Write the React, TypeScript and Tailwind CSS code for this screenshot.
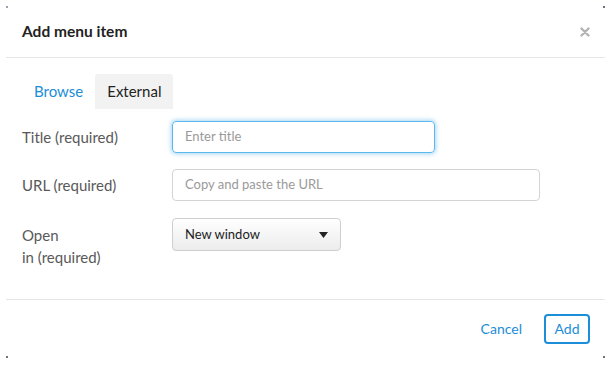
import React from "react";

export default function App() {
  const font = { fontFamily: "Lato, 'Open Sans', 'Noto Sans', sans-serif" };
  return (
    <div className="w-[611px] h-[365px] bg-white relative overflow-hidden" style={font}>
      {/* corner marks */}
      <div className="absolute left-[6px] top-[6px] w-[2px] h-[2px] bg-gray-400" />
      <div className="absolute right-[6px] top-[6px] w-[2px] h-[2px] bg-gray-500" />
      <div className="absolute left-[6px] bottom-[7px] w-[2px] h-[2px] bg-gray-500" />
      <div className="absolute right-[6px] bottom-[7px] w-[2px] h-[2px] bg-gray-500" />
      <div className="ml-[6px] mt-[6px] w-[599px] h-[352px] flex flex-col">
        {/* header */}
        <div className="h-[52px] flex items-center justify-between pl-[16px] pr-[15px] border-b border-[#e6e6e6] shrink-0">
          <div className="text-[15.5px] font-bold text-[#222]">Add menu item</div>
          <svg width="10" height="10" viewBox="0 0 10 10">
            <path d="M1.5 1.5 L8.5 8.5 M8.5 1.5 L1.5 8.5" stroke="#b3b3b3" strokeWidth="2.4" strokeLinecap="round" />
          </svg>
        </div>
        {/* body */}
        <div className="flex-1 pl-[16px] pt-[16px]">
          <div className="flex h-[35px] text-[15px]">
            <div className="px-[12px] flex items-center text-[#1c8dd8]">Browse</div>
            <div className="px-[12px] flex items-center bg-[#f2f2f2] rounded-t-[3px] text-[#222]">External</div>
          </div>
          <div className="flex flex-col gap-[16px] mt-[12px] text-[15px]">
            <div className="flex items-center h-[32px]">
              <div className="w-[150px] text-[#595959]">Title (required)</div>
              <div className="w-[263px] h-[32px] rounded-[4px] border border-[#5eb8ec] shadow-[0_0_4px_1px_rgba(90,180,235,0.55)] flex items-center px-[12px] text-[13px] text-[#9a9a9a]">
                Enter title
              </div>
            </div>
            <div className="flex items-center h-[32px]">
              <div className="w-[150px] text-[#595959]">URL (required)</div>
              <div className="w-[368px] h-[32px] rounded-[4px] border border-[#d4d4d4] flex items-center px-[12px] text-[13px] text-[#9a9a9a]">
                Copy and paste the URL
              </div>
            </div>
            <div className="flex items-start h-[50px] mt-[1px]">
              <div className="w-[150px] text-[#595959] leading-[22px] pt-[6px]">
                Open
                <br />
                in (required)
              </div>
              <div className="w-[169px] h-[33px] rounded-[4px] border border-[#cfcfcf] bg-gradient-to-b from-white to-[#ececec] flex items-center justify-between pl-[12px] pr-[12px] text-[13px] text-[#222]">
                <span>New window</span>
                <svg width="9" height="6" viewBox="0 0 9 6">
                  <path d="M0 0 L9 0 L4.5 6 Z" fill="#222" />
                </svg>
              </div>
            </div>
          </div>
        </div>
        {/* footer */}
        <div className="h-[59px] border-t border-[#e6e6e6] flex items-center justify-end pr-[15px] pb-[1px] shrink-0">
          <div className="text-[14px] text-[#1c8dd8] mr-[22px]">Cancel</div>
          <div className="w-[46px] h-[30px] rounded-[4px] border-2 border-[#1c8dd8] flex items-center justify-center text-[14px] text-[#1c8dd8]">
            Add
          </div>
        </div>
      </div>
    </div>
  );
}
